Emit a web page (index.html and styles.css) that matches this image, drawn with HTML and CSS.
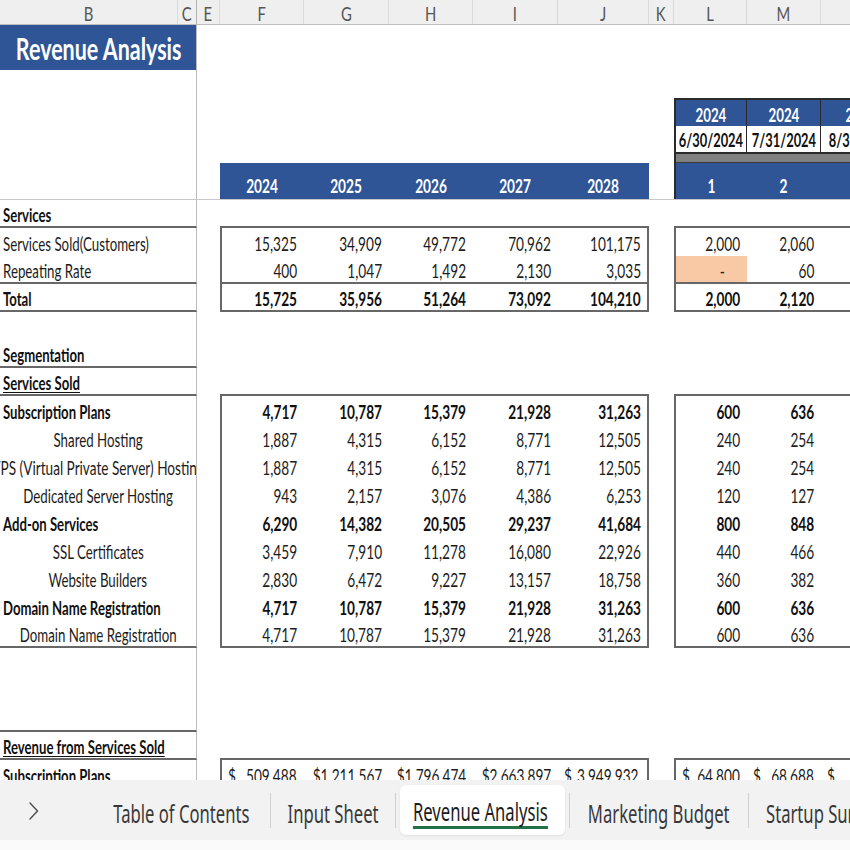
FILE: index.html
```html
<!DOCTYPE html>
<html lang="en">
<head>
<meta charset="utf-8">
<title>Revenue Analysis</title>
<link rel="stylesheet" href="styles.css">
</head>
<body>
<div class="app">
  <div class="sheet">
    <div class="r hdr">
      <div class="c h"><span>B</span></div><div class="c h fz"><span>C</span></div><div class="c h"><span>E</span></div>
      <div class="c h"><span>F</span></div><div class="c h"><span>G</span></div><div class="c h"><span>H</span></div>
      <div class="c h"><span>I</span></div><div class="c h"><span>J</span></div><div class="c h"><span>K</span></div>
      <div class="c h"><span>L</span></div><div class="c h"><span>M</span></div><div class="c h"><span>N</span></div>
    </div>

    <div class="r ttl"><div class="c lab mid title"><span>Revenue Analysis</span></div></div>
    <div class="r"><div class="c lab"></div></div>

    <div class="r">
      <div class="c lab"></div>
      <div class="c yr cL bl2 sep"><span>2024</span></div><div class="c yr sep"><span>2024</span></div><div class="c yr"><span>2024</span></div>
    </div>
    <div class="r">
      <div class="c lab"></div>
      <div class="c dt cL bl2 sep"><span>6/30/2024</span></div><div class="c dt sep"><span>7/31/2024</span></div><div class="c dt"><span>8/31/2024</span></div>
    </div>
    <div class="r gr">
      <div class="c lab"></div>
      <div class="c gb cL bl2"></div><div class="c gb"></div><div class="c gb"></div>
    </div>
    <div class="r bh">
      <div class="c lab"></div><div class="c"></div>
      <div class="c hb"><span>2024</span></div><div class="c hb"><span>2025</span></div><div class="c hb"><span>2026</span></div><div class="c hb"><span>2027</span></div><div class="c hb"><span>2028</span></div>
      <div class="c"></div>
      <div class="c hb bl2"><span>1</span></div><div class="c hb"><span>2</span></div><div class="c hb"><span>3</span></div>
    </div>

    <!-- Services -->
    <div class="r">
      <div class="c lab b bb"><span>Services</span></div><div class="c"></div>
      <div class="c bb"></div><div class="c bb"></div><div class="c bb"></div><div class="c bb"></div><div class="c bb"></div>
      <div class="c"></div>
      <div class="c bb"></div><div class="c bb"></div><div class="c bb"></div>
    </div>
    <div class="r">
      <div class="c lab"><span>Services Sold(Customers)</span></div><div class="c"></div>
      <div class="c n bl"><span>15,325</span></div><div class="c n"><span>34,909</span></div><div class="c n"><span>49,772</span></div><div class="c n"><span>70,962</span></div><div class="c n br"><span>101,175</span></div>
      <div class="c"></div>
      <div class="c n bl"><span>2,000</span></div><div class="c n"><span>2,060</span></div><div class="c n"><span>2,122</span></div>
    </div>
    <div class="r">
      <div class="c lab bb"><span>Repeating Rate</span></div><div class="c"></div>
      <div class="c n bl bb"><span>400</span></div><div class="c n bb"><span>1,047</span></div><div class="c n bb"><span>1,492</span></div><div class="c n bb"><span>2,130</span></div><div class="c n br bb"><span>3,035</span></div>
      <div class="c"></div>
      <div class="c n bl bb fill dash"><span>-</span></div><div class="c n bb"><span>60</span></div><div class="c n bb"><span>124</span></div>
    </div>
    <div class="r">
      <div class="c lab b bb"><span>Total</span></div><div class="c"></div>
      <div class="c n b bl bb"><span>15,725</span></div><div class="c n b bb"><span>35,956</span></div><div class="c n b bb"><span>51,264</span></div><div class="c n b bb"><span>73,092</span></div><div class="c n b br bb"><span>104,210</span></div>
      <div class="c"></div>
      <div class="c n b bl bb"><span>2,000</span></div><div class="c n b bb"><span>2,120</span></div><div class="c n b bb"><span>2,246</span></div>
    </div>

    <div class="r"><div class="c lab"></div></div>

    <!-- Segmentation -->
    <div class="r"><div class="c lab b bb"><span>Segmentation</span></div></div>
    <div class="r">
      <div class="c lab b u bb"><span>Services Sold</span></div><div class="c"></div>
      <div class="c bb"></div><div class="c bb"></div><div class="c bb"></div><div class="c bb"></div><div class="c bb"></div>
      <div class="c"></div>
      <div class="c bb"></div><div class="c bb"></div><div class="c bb"></div>
    </div>
    <div class="r">
      <div class="c lab b"><span>Subscription Plans</span></div><div class="c"></div>
      <div class="c n b bl"><span>4,717</span></div><div class="c n b"><span>10,787</span></div><div class="c n b"><span>15,379</span></div><div class="c n b"><span>21,928</span></div><div class="c n b br"><span>31,263</span></div>
      <div class="c"></div>
      <div class="c n b bl"><span>600</span></div><div class="c n b"><span>636</span></div><div class="c n b"><span>674</span></div>
    </div>
    <div class="r">
      <div class="c lab mid"><span>Shared Hosting</span></div><div class="c"></div>
      <div class="c n bl"><span>1,887</span></div><div class="c n"><span>4,315</span></div><div class="c n"><span>6,152</span></div><div class="c n"><span>8,771</span></div><div class="c n br"><span>12,505</span></div>
      <div class="c"></div>
      <div class="c n bl"><span>240</span></div><div class="c n"><span>254</span></div><div class="c n"><span>270</span></div>
    </div>
    <div class="r">
      <div class="c lab mid wide"><span>VPS (Virtual Private Server) Hosting</span></div><div class="c"></div>
      <div class="c n bl"><span>1,887</span></div><div class="c n"><span>4,315</span></div><div class="c n"><span>6,152</span></div><div class="c n"><span>8,771</span></div><div class="c n br"><span>12,505</span></div>
      <div class="c"></div>
      <div class="c n bl"><span>240</span></div><div class="c n"><span>254</span></div><div class="c n"><span>270</span></div>
    </div>
    <div class="r">
      <div class="c lab mid"><span>Dedicated Server Hosting</span></div><div class="c"></div>
      <div class="c n bl"><span>943</span></div><div class="c n"><span>2,157</span></div><div class="c n"><span>3,076</span></div><div class="c n"><span>4,386</span></div><div class="c n br"><span>6,253</span></div>
      <div class="c"></div>
      <div class="c n bl"><span>120</span></div><div class="c n"><span>127</span></div><div class="c n"><span>135</span></div>
    </div>
    <div class="r">
      <div class="c lab b"><span>Add-on Services</span></div><div class="c"></div>
      <div class="c n b bl"><span>6,290</span></div><div class="c n b"><span>14,382</span></div><div class="c n b"><span>20,505</span></div><div class="c n b"><span>29,237</span></div><div class="c n b br"><span>41,684</span></div>
      <div class="c"></div>
      <div class="c n b bl"><span>800</span></div><div class="c n b"><span>848</span></div><div class="c n b"><span>898</span></div>
    </div>
    <div class="r">
      <div class="c lab mid"><span>SSL Certificates</span></div><div class="c"></div>
      <div class="c n bl"><span>3,459</span></div><div class="c n"><span>7,910</span></div><div class="c n"><span>11,278</span></div><div class="c n"><span>16,080</span></div><div class="c n br"><span>22,926</span></div>
      <div class="c"></div>
      <div class="c n bl"><span>440</span></div><div class="c n"><span>466</span></div><div class="c n"><span>494</span></div>
    </div>
    <div class="r">
      <div class="c lab mid"><span>Website Builders</span></div><div class="c"></div>
      <div class="c n bl"><span>2,830</span></div><div class="c n"><span>6,472</span></div><div class="c n"><span>9,227</span></div><div class="c n"><span>13,157</span></div><div class="c n br"><span>18,758</span></div>
      <div class="c"></div>
      <div class="c n bl"><span>360</span></div><div class="c n"><span>382</span></div><div class="c n"><span>404</span></div>
    </div>
    <div class="r">
      <div class="c lab b"><span>Domain Name Registration</span></div><div class="c"></div>
      <div class="c n b bl"><span>4,717</span></div><div class="c n b"><span>10,787</span></div><div class="c n b"><span>15,379</span></div><div class="c n b"><span>21,928</span></div><div class="c n b br"><span>31,263</span></div>
      <div class="c"></div>
      <div class="c n b bl"><span>600</span></div><div class="c n b"><span>636</span></div><div class="c n b"><span>674</span></div>
    </div>
    <div class="r">
      <div class="c lab mid bb"><span>Domain Name Registration</span></div><div class="c"></div>
      <div class="c n bl bb"><span>4,717</span></div><div class="c n bb"><span>10,787</span></div><div class="c n bb"><span>15,379</span></div><div class="c n bb"><span>21,928</span></div><div class="c n br bb"><span>31,263</span></div>
      <div class="c"></div>
      <div class="c n bl bb"><span>600</span></div><div class="c n bb"><span>636</span></div><div class="c n bb"><span>674</span></div>
    </div>

    <div class="r"><div class="c lab"></div></div>
    <div class="r"><div class="c lab"></div></div>
    <div class="r"><div class="c lab bb"></div></div>

    <!-- Revenue -->
    <div class="r">
      <div class="c lab b u bb"><span>Revenue from Services Sold</span></div><div class="c"></div>
      <div class="c bb"></div><div class="c bb"></div><div class="c bb"></div><div class="c bb"></div><div class="c bb"></div>
      <div class="c"></div>
      <div class="c bb"></div><div class="c bb"></div><div class="c bb"></div>
    </div>
    <div class="r">
      <div class="c lab b"><span>Subscription Plans</span></div><div class="c"></div>
      <div class="c acc bl"><span>$</span><span>509,488</span></div><div class="c n"><span>$1,211,567</span></div><div class="c n"><span>$1,796,474</span></div><div class="c n"><span>$2,663,897</span></div><div class="c acc br"><span>$</span><span>3,949,932</span></div>
      <div class="c"></div>
      <div class="c acc bl"><span>$</span><span>64,800</span></div><div class="c acc"><span>$</span><span>68,688</span></div><div class="c acc"><span>$</span><span>72,809</span></div>
    </div>
    <div class="r">
      <div class="c lab mid"><span>Shared Hosting</span></div><div class="c"></div>
      <div class="c n bl"></div><div class="c n"></div><div class="c n"></div><div class="c n"></div><div class="c n br"></div>
      <div class="c"></div>
      <div class="c n bl"></div><div class="c n"></div><div class="c n"></div>
    </div>
  </div>

  <div class="tabbar">
    <div class="nav">
      <svg class="chev" width="12" height="20" viewBox="0 0 12 20"><polyline points="2,2 9.5,10 2,18" fill="none" stroke="#4d4d4d" stroke-width="1.4" stroke-linecap="round" stroke-linejoin="round"/></svg>
    </div>
    <div class="tab t1"><span>Table of Contents</span></div>
    <i class="sep"></i>
    <div class="tab t2"><span>Input Sheet</span></div>
    <i class="sep"></i>
    <div class="tab act"><span>Revenue Analysis</span></div>
    <i class="sep"></i>
    <div class="tab t4"><span>Marketing Budget</span></div>
    <i class="sep"></i>
    <div class="tab t5"><span>Startup Summary</span></div>
  </div>
  <div class="foot"></div>
</div>
</body>
</html>
```
FILE: styles.css
```css
* { box-sizing: border-box; margin: 0; padding: 0; }
html, body { width: 850px; height: 850px; overflow: hidden; background: #ffffff; }
body { font-family: Lato, "Open Sans", sans-serif; }

.app { display: flex; flex-direction: column; height: 850px; width: 850px; overflow: hidden; }
.sheet { height: 780px; flex: none; overflow: hidden; }

.r {
  display: grid;
  grid-template-columns: 178px 19px 23px 84px 85px 84px 85px 91px 25px 73px 74px 80px;
  height: 28px;
  width: 901px;
}

.c {
  --sx: .738;
  display: flex;
  align-items: center;
  padding-top: 5px;
  overflow: hidden;
  white-space: nowrap;
  font-size: 18.5px;
  color: #1c1c1c;
  min-width: 0;
}
.c span {
  display: inline-block;
  line-height: 1;
  flex: none;
  transform: scaleX(var(--sx));
  transform-origin: 0 50%;
}

/* column header */
.hdr { height: 25px; border-bottom: 1px solid #bdbdbd; background: #efefef; }
.h {
  --sx: .74;
  justify-content: center;
  padding-top: 1px;
  font-size: 20px;
  color: #555555;
  border-right: 1px solid #dadada;
}
.h span { transform-origin: 50% 50%; }
.h.fz { border-right-color: #b3b3b3; }

/* labels */
.lab { --sx: .718; grid-column: span 2; padding-left: 3px; border-right: 1px solid #bcbcbc; }
.lab.b { --sx: .71; }
.mid { justify-content: center; padding-left: 0; }
.mid span { transform-origin: 50% 50%; }
.wide { --sx: .735; }
.b { font-weight: 700; color: #111111; }
.u span { text-decoration: underline; text-decoration-thickness: 1px; text-underline-offset: 2px; }

/* title */
.ttl { height: 45px; }
.title {
  --sx: .716;
  background: #2f5597;
  color: #ffffff;
  font-size: 30px;
  font-weight: 700;
  padding-top: 0;
  padding-left: 2px;
}

/* numbers */
.n { justify-content: flex-end; padding-right: 7px; }
.n span { transform-origin: 100% 50%; }
.n.br { padding-right: 6px; }
.dash { padding-right: 22px; }
.acc {
  display: grid;
  grid-template-columns: auto minmax(0, 1fr);
  align-items: center;
  padding: 5px 7px 0 6px;
}
.acc span:last-child { justify-self: end; transform-origin: 100% 50%; }
.acc.br { padding-right: 8px; }

.bb { border-bottom: 2px solid #676767; }
.bl { border-left: 2px solid #676767; }
.br { border-right: 2px solid #676767; }
.fill { background: #f8c9a4; }

/* monthly block header */
.cL { grid-column: 10; }
.bl2 { border-left: 2px solid #2a2a2a; }
.sep { border-right: 1px solid #2a2a2a; }
.yr {
  --sx: .74;
  background: #2f5597;
  color: #ffffff;
  font-weight: 700;
  font-size: 18px;
  justify-content: center;
  border-top: 2px solid #2a2a2a;
  padding-top: 3px;
}
.yr span, .dt span { transform-origin: 50% 50%; }
.dt {
  --sx: .715;
  background: #ffffff;
  color: #111111;
  font-weight: 700;
  font-size: 18px;
  justify-content: center;
  border-bottom: 2px solid #2a2a2a;
  padding-top: 2px;
}
.gr { height: 9px; }
.gb { background: #808080; border-bottom: 1px solid #3a3a3a; padding-top: 0; }

.bh { height: 37px; border-bottom: 1px solid #c8c8c8; }
.hb {
  --sx: .72;
  background: #2f5597;
  color: #ffffff;
  font-weight: 700;
  font-size: 19px;
  justify-content: center;
  align-items: flex-end;
  padding-bottom: 4px;
}
.hb span { transform-origin: 50% 50%; }

/* sheet tabs */
.tabbar {
  height: 60px;
  flex: none;
  display: flex;
  align-items: center;
  background: #f2f2f2;
  font-family: "Noto Sans", "Open Sans", sans-serif;
}
.nav { width: 93px; flex: none; display: flex; align-items: center; padding-left: 28px; padding-top: 2px; }
.tab {
  height: 50px;
  flex: none;
  display: flex;
  align-items: center;
  justify-content: center;
  padding-top: 6px;
  font-size: 26px;
  color: #383838;
  white-space: nowrap;
  overflow: hidden;
}
.tab span { display: inline-block; line-height: 1; transform: scaleX(.64); transform-origin: 50% 50%; }
.t1 { width: 177px; }
.t2 { width: 124px; }
.act {
  width: 165px;
  margin: 0 4px 0 4px;
  background: #ffffff;
  border-radius: 6px;
  color: #1b1b1b;
  padding-right: 4px;
  box-shadow: 0 1px 2px rgba(0,0,0,.08);
}
.act span { border-bottom: 3px solid #217346; padding-bottom: 2px; }
.t4 { width: 178px; }
.t5 { width: 200px; justify-content: flex-start; padding-left: 17px; }
.t5 span { transform-origin: 0 50%; }
.tabbar .sep { width: 1px; height: 35px; background: #d0d0d0; flex: none; border: 0; }
.foot { height: 10px; background: #fafafa; flex: none; }
```
